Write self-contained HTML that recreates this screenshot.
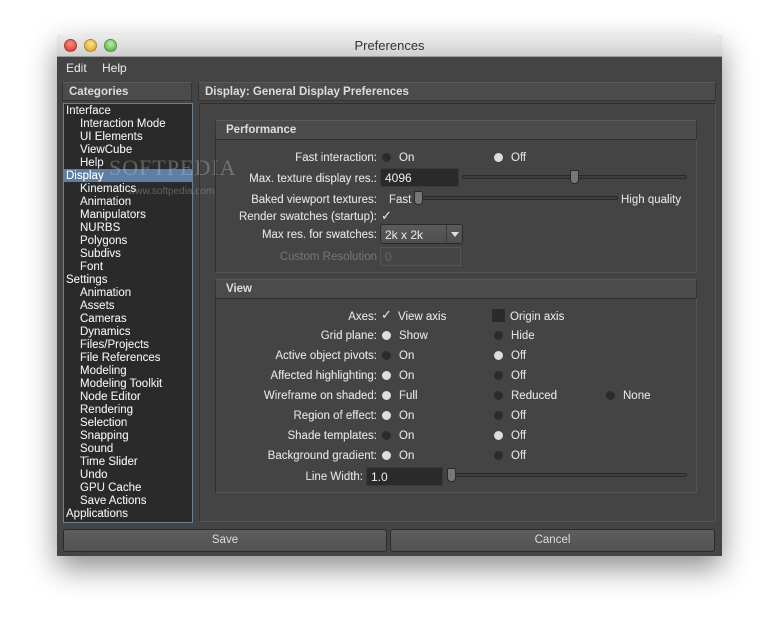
<!DOCTYPE html>
<html><head><meta charset="utf-8"><style>
*{margin:0;padding:0;box-sizing:border-box}
body{width:779px;height:636px;background:#fff;position:relative;overflow:hidden;font-family:"Liberation Sans",sans-serif;font-size:11.5px;color:#ddd}
.a{position:absolute}
.win{left:57px;top:35px;width:665px;height:521px;background:#444;box-shadow:0 12px 30px rgba(0,0,0,.45);border-radius:4px 4px 0 0}
.tb{left:57px;top:35px;width:665px;height:22px;background:linear-gradient(#ececec,#cfcfcf);border-radius:4px 4px 0 0;border-bottom:1px solid #999;color:#333;font-size:13px;text-align:center;line-height:22px}
.dot{width:13px;height:13px;border-radius:50%;top:39px;border:1px solid rgba(0,0,0,.25)}
.hd{background:#4b4b4b;border:1px solid #333;border-top-color:#5a5a5a;font-weight:bold;color:#ddd;padding-left:6px;line-height:18px}
.it{left:66px;line-height:13px;color:#e8e8e8;white-space:nowrap;transform:translateY(1px);text-shadow:0 0 .3px #e8e8e8}
.it.s{left:80px}
.lb{text-align:right;width:200px;color:#ddd;line-height:14px;transform:translateY(1px);text-shadow:0 0 .3px #ddd}
.r{width:9px;height:9px;border-radius:50%;background:#2b2b2b}
.r.on{background:#ddd}
.t{line-height:14px;white-space:nowrap;transform:translateY(1px);text-shadow:0 0 .3px #ddd}
.inp{background:#2a2a2a;border:1px solid #3a3a3a;height:19px;line-height:18px;padding-left:4px;color:#eee;font-size:12px}
.trk{height:4px;border:1px solid #2a2a2a;background:#3e3e3e;border-radius:2px}
.th{width:9px;height:14px;background:#777;border:1px solid #2a2a2a;border-radius:2px 2px 4px 4px}
.btn{background:linear-gradient(#5e5e5e,#525252);border:1px solid #2a2a2a;border-radius:3px;text-align:center;line-height:21px;color:#ddd}
</style></head><body>
<div class="a win"></div>
<div class="a tb">Preferences</div>
<div class="a dot" style="left:64px;background:radial-gradient(circle at 50% 35%,#ff8a80,#d0312a)"></div>
<div class="a dot" style="left:84px;background:radial-gradient(circle at 50% 35%,#ffe08a,#d8a020)"></div>
<div class="a dot" style="left:104px;background:radial-gradient(circle at 50% 35%,#b8f0a0,#4aa83a)"></div>
<div class="a t" style="left:66px;top:60px;font-size:12px">Edit</div>
<div class="a t" style="left:102px;top:60px;font-size:12px">Help</div>

<div class="a hd" style="left:62px;top:82px;width:130px;height:19px">Categories</div>
<div class="a hd" style="left:198px;top:82px;width:518px;height:19px">Display: General Display Preferences</div>

<div class="a" style="left:63px;top:103px;width:130px;height:420px;background:#2a2a2a;border:1px solid #6c8094"></div>
<div class="a" style="left:64px;top:169px;width:128px;height:13px;background:#5d7fa6"></div>
<div class="a it" style="top:104px">Interface</div>
<div class="a it s" style="top:117px">Interaction Mode</div>
<div class="a it s" style="top:130px">UI Elements</div>
<div class="a it s" style="top:143px">ViewCube</div>
<div class="a it s" style="top:156px">Help</div>
<div class="a it" style="top:169px;color:#fff">Display</div>
<div class="a it s" style="top:182px">Kinematics</div>
<div class="a it s" style="top:195px">Animation</div>
<div class="a it s" style="top:208px">Manipulators</div>
<div class="a it s" style="top:221px">NURBS</div>
<div class="a it s" style="top:234px">Polygons</div>
<div class="a it s" style="top:247px">Subdivs</div>
<div class="a it s" style="top:260px">Font</div>
<div class="a it" style="top:273px">Settings</div>
<div class="a it s" style="top:286px">Animation</div>
<div class="a it s" style="top:299px">Assets</div>
<div class="a it s" style="top:312px">Cameras</div>
<div class="a it s" style="top:325px">Dynamics</div>
<div class="a it s" style="top:338px">Files/Projects</div>
<div class="a it s" style="top:351px">File References</div>
<div class="a it s" style="top:364px">Modeling</div>
<div class="a it s" style="top:377px">Modeling Toolkit</div>
<div class="a it s" style="top:390px">Node Editor</div>
<div class="a it s" style="top:403px">Rendering</div>
<div class="a it s" style="top:416px">Selection</div>
<div class="a it s" style="top:429px">Snapping</div>
<div class="a it s" style="top:442px">Sound</div>
<div class="a it s" style="top:455px">Time Slider</div>
<div class="a it s" style="top:468px">Undo</div>
<div class="a it s" style="top:481px">GPU Cache</div>
<div class="a it s" style="top:494px">Save Actions</div>
<div class="a it" style="top:507px">Applications</div>

<div class="a" style="left:109px;top:155px;font-family:'Liberation Serif',serif;font-size:22px;color:rgba(200,200,200,.35);letter-spacing:1px">SOFTPEDIA</div>
<div class="a" style="left:128px;top:186px;font-size:10px;color:rgba(200,200,200,.35)">www.softpedia.com</div>

<div class="a" style="left:199px;top:103px;width:517px;height:419px;border:1px solid #333;border-top-color:#2e2e2e;border-right-color:#555;border-bottom-color:#555"></div>

<div class="a hd" style="left:215px;top:120px;width:482px;height:20px;line-height:19px;padding-left:10px">Performance</div>
<div class="a" style="left:215px;top:139px;width:482px;height:134px;border:1px solid #2e2e2e;border-right-color:#555;border-bottom-color:#555"></div>

<div class="a lb" style="left:177px;top:150px">Fast interaction:</div>
<div class="a r" style="left:382px;top:153px"></div><div class="a t" style="left:399px;top:150px">On</div>
<div class="a r on" style="left:494px;top:153px"></div><div class="a t" style="left:511px;top:150px">Off</div>

<div class="a lb" style="left:177px;top:171px">Max. texture display res.:</div>
<div class="a inp" style="left:380px;top:168px;width:79px">4096</div>
<div class="a trk" style="left:462px;top:175px;width:225px"></div>
<div class="a th" style="left:570px;top:170px"></div>

<div class="a lb" style="left:177px;top:192px">Baked viewport textures:</div>
<div class="a t" style="left:389px;top:192px">Fast</div>
<div class="a trk" style="left:418px;top:196px;width:200px"></div>
<div class="a th" style="left:414px;top:191px"></div>
<div class="a t" style="left:621px;top:192px">High quality</div>

<div class="a lb" style="left:177px;top:209px">Render swatches (startup):</div>
<div class="a t" style="left:381px;top:208px;font-size:13px">✓</div>

<div class="a lb" style="left:177px;top:227px">Max res. for swatches:</div>
<div class="a" style="left:380px;top:224px;width:83px;height:20px;background:linear-gradient(#5a5a5a,#4e4e4e);border:1px solid #2a2a2a;border-radius:3px"></div>
<div class="a t" style="left:385px;top:227px;font-size:12px">2k x 2k</div>
<div class="a" style="left:446px;top:225px;width:1px;height:18px;background:#3a3a3a"></div>
<div class="a" style="left:451px;top:232px;width:0;height:0;border-left:4px solid transparent;border-right:4px solid transparent;border-top:5px solid #ddd"></div>

<div class="a lb" style="left:177px;top:249px;color:#777;text-shadow:none">Custom Resolution</div>
<div class="a inp" style="left:380px;top:247px;width:81px;background:#454545;border-color:#555;color:#666">0</div>

<div class="a hd" style="left:215px;top:279px;width:482px;height:20px;line-height:19px;padding-left:10px">View</div>
<div class="a" style="left:215px;top:298px;width:482px;height:195px;border:1px solid #2e2e2e;border-right-color:#555;border-bottom-color:#555"></div>

<div class="a lb" style="left:177px;top:309px">Axes:</div>
<div class="a t" style="left:381px;top:307px;font-size:13px">✓</div><div class="a t" style="left:398px;top:309px">View axis</div>
<div class="a" style="left:492px;top:309px;width:13px;height:13px;background:#2b2b2b"></div><div class="a t" style="left:510px;top:309px">Origin axis</div>

<div class="a lb" style="left:177px;top:328px">Grid plane:</div>
<div class="a r on" style="left:382px;top:331px"></div><div class="a t" style="left:399px;top:328px">Show</div>
<div class="a r" style="left:494px;top:331px"></div><div class="a t" style="left:511px;top:328px">Hide</div>

<div class="a lb" style="left:177px;top:348px">Active object pivots:</div>
<div class="a r" style="left:382px;top:351px"></div><div class="a t" style="left:399px;top:348px">On</div>
<div class="a r on" style="left:494px;top:351px"></div><div class="a t" style="left:511px;top:348px">Off</div>

<div class="a lb" style="left:177px;top:368px">Affected highlighting:</div>
<div class="a r on" style="left:382px;top:371px"></div><div class="a t" style="left:399px;top:368px">On</div>
<div class="a r" style="left:494px;top:371px"></div><div class="a t" style="left:511px;top:368px">Off</div>

<div class="a lb" style="left:177px;top:388px">Wireframe on shaded:</div>
<div class="a r on" style="left:382px;top:391px"></div><div class="a t" style="left:399px;top:388px">Full</div>
<div class="a r" style="left:494px;top:391px"></div><div class="a t" style="left:511px;top:388px">Reduced</div>
<div class="a r" style="left:606px;top:391px"></div><div class="a t" style="left:623px;top:388px">None</div>

<div class="a lb" style="left:177px;top:408px">Region of effect:</div>
<div class="a r on" style="left:382px;top:411px"></div><div class="a t" style="left:399px;top:408px">On</div>
<div class="a r" style="left:494px;top:411px"></div><div class="a t" style="left:511px;top:408px">Off</div>

<div class="a lb" style="left:177px;top:428px">Shade templates:</div>
<div class="a r" style="left:382px;top:431px"></div><div class="a t" style="left:399px;top:428px">On</div>
<div class="a r on" style="left:494px;top:431px"></div><div class="a t" style="left:511px;top:428px">Off</div>

<div class="a lb" style="left:177px;top:448px">Background gradient:</div>
<div class="a r on" style="left:382px;top:451px"></div><div class="a t" style="left:399px;top:448px">On</div>
<div class="a r" style="left:494px;top:451px"></div><div class="a t" style="left:511px;top:448px">Off</div>

<div class="a lb" style="left:163px;top:469px">Line Width:</div>
<div class="a inp" style="left:366px;top:467px;width:77px">1.0</div>
<div class="a trk" style="left:450px;top:473px;width:237px"></div>
<div class="a th" style="left:447px;top:468px"></div>

<div class="a btn" style="left:63px;top:529px;width:324px;height:23px">Save</div>
<div class="a btn" style="left:390px;top:529px;width:325px;height:23px">Cancel</div>
</body></html>
